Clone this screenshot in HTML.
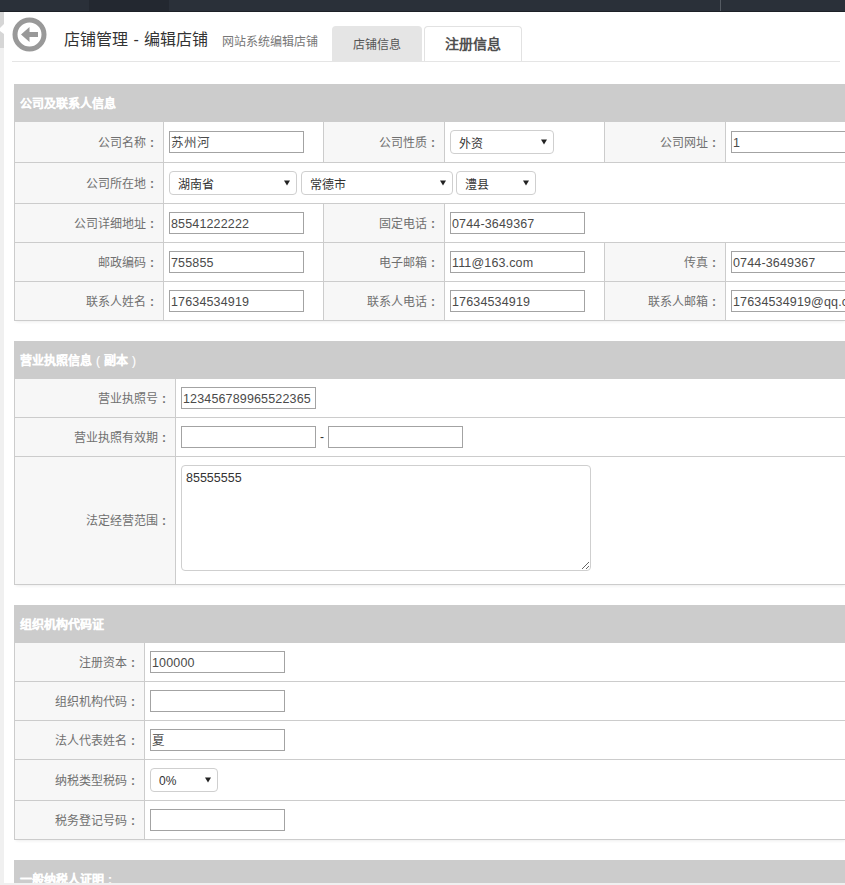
<!DOCTYPE html>
<html lang="zh-CN">
<head>
<meta charset="utf-8">
<style>
*{box-sizing:border-box}
html,body{margin:0;padding:0}
body{text-spacing-trim:space-all;width:845px;height:885px;overflow:hidden;position:relative;background:#fff;font-family:"Liberation Sans",sans-serif;font-size:12px;color:#555}
.a{position:absolute}
i{font-style:normal}
.co{display:inline-block;width:12px;text-align:center;font-weight:bold}
.lbl{white-space:nowrap;color:#707070;font-size:12px;padding-top:1px}
.hd{height:38px;line-height:38px;color:#fff;font-weight:bold;-webkit-text-stroke:0.15px #fff;font-size:12px;white-space:nowrap;padding-top:1px}
.inp{border:1px solid #a3a3a3;background:#fff;color:#4a4a4a;letter-spacing:0.15px;font-size:12.5px;line-height:20px;padding-left:1px;padding-top:1px;white-space:nowrap;overflow:hidden}
.sel{height:24px;border:1px solid #cfcfcf;border-radius:4px;background:#fff;color:#333;font-size:12px;line-height:22px;white-space:nowrap}
.sel .st{position:absolute;left:8px;top:1.5px}
.sel .ar{position:absolute;right:6px;top:8px}
.dash{font-size:12px;line-height:22px;color:#333}
.ta{border:1px solid #cfcfcf;border-radius:4px;background:#fff;color:#333;font-size:12.5px;line-height:16px;padding:4px 0 0 4px}
.ta .rs{position:absolute;right:1px;bottom:1px}
.topbar{left:0;top:0;width:845px;height:12px;background:#2a3039;border-bottom:1px solid #1d2127}
.title{left:64px;top:29px;font-size:16px;line-height:22px;color:#333;white-space:nowrap}
.sub{left:222px;top:34px;font-size:12px;line-height:16px;color:#777;white-space:nowrap}
.tab{top:26px;height:36px;border-radius:4px 4px 0 0;text-align:center;white-space:nowrap}
.tab1{left:332px;width:90px;background:#e5e5e5;font-size:12px;line-height:36px;padding-top:1px;color:#555}
.tab2{left:424px;width:98px;background:#fff;border:1px solid #e2e2e2;border-bottom:none;font-size:14px;font-weight:bold;line-height:34px;color:#505050}
</style>
</head>
<body>
<div class="a topbar"></div>
<div class="a" style="left:89px;top:0;width:80px;height:11px;background:#232830"></div>
<div class="a" style="left:720px;top:0;width:1px;height:11px;background:#555b63"></div>
<div class="a" style="left:0;top:12px;width:4px;height:873px;background:#f0f0f0"></div>
<div class="a" style="left:0;top:12px;width:4px;height:36px;background:#d6d6d6"></div>
<svg class="a" style="left:0;top:22px" width="5" height="14"><polygon points="4,2 0,6 0,9 4,12" fill="#fff"/></svg>
<svg class="a" style="left:12px;top:17px" width="36" height="36" viewBox="0 0 36 36">
<circle cx="17.5" cy="17.5" r="14.5" fill="none" stroke="#999" stroke-width="5"/>
<polygon points="9,17.5 17.5,10 17.5,15 26,15 26,20 17.5,20 17.5,25" fill="#999"/>
</svg>
<div class="a title">店铺管理<span style="word-spacing:1px"> - </span>编辑店铺</div>
<div class="a sub">网站系统编辑店铺</div>
<div class="a tab tab1">店铺信息</div>
<div class="a tab tab2">注册信息</div>
<div class="a" style="left:12px;top:61px;width:828px;height:1px;background:#e5e5e5"></div>
<div class="a" style="left:14px;top:84px;width:831px;height:38px;background:#cccccc"></div>
<div class="a hd" style="left:20px;top:84px;">公司及联系人信息</div>
<div class="a" style="left:14px;top:122px;width:831px;height:199px;box-shadow:1px 2px 3px -1px rgba(0,0,0,.07);background:#fff"></div>
<div class="a" style="left:14px;top:122px;width:1px;height:41px;background:#cccccc"></div>
<div class="a" style="left:14px;top:162px;width:831px;height:1px;background:#cccccc"></div>
<div class="a" style="left:15px;top:122px;width:148px;height:40px;background:#f7f7f7"></div>
<div class="a" style="left:163px;top:122px;width:1px;height:40px;background:#cccccc"></div>
<div class="a" style="left:323px;top:122px;width:1px;height:40px;background:#cccccc"></div>
<div class="a" style="left:324px;top:122px;width:120px;height:40px;background:#f7f7f7"></div>
<div class="a" style="left:444px;top:122px;width:1px;height:40px;background:#cccccc"></div>
<div class="a" style="left:604px;top:122px;width:1px;height:40px;background:#cccccc"></div>
<div class="a" style="left:605px;top:122px;width:120px;height:40px;background:#f7f7f7"></div>
<div class="a" style="left:725px;top:122px;width:1px;height:40px;background:#cccccc"></div>
<div class="a" style="left:14px;top:163px;width:1px;height:41px;background:#cccccc"></div>
<div class="a" style="left:14px;top:203px;width:831px;height:1px;background:#cccccc"></div>
<div class="a" style="left:15px;top:163px;width:148px;height:40px;background:#f7f7f7"></div>
<div class="a" style="left:163px;top:163px;width:1px;height:40px;background:#cccccc"></div>
<div class="a" style="left:14px;top:204px;width:1px;height:39px;background:#cccccc"></div>
<div class="a" style="left:14px;top:242px;width:831px;height:1px;background:#cccccc"></div>
<div class="a" style="left:15px;top:204px;width:148px;height:38px;background:#f7f7f7"></div>
<div class="a" style="left:163px;top:204px;width:1px;height:38px;background:#cccccc"></div>
<div class="a" style="left:323px;top:204px;width:1px;height:38px;background:#cccccc"></div>
<div class="a" style="left:324px;top:204px;width:120px;height:38px;background:#f7f7f7"></div>
<div class="a" style="left:444px;top:204px;width:1px;height:38px;background:#cccccc"></div>
<div class="a" style="left:14px;top:243px;width:1px;height:39px;background:#cccccc"></div>
<div class="a" style="left:14px;top:281px;width:831px;height:1px;background:#cccccc"></div>
<div class="a" style="left:15px;top:243px;width:148px;height:38px;background:#f7f7f7"></div>
<div class="a" style="left:163px;top:243px;width:1px;height:38px;background:#cccccc"></div>
<div class="a" style="left:323px;top:243px;width:1px;height:38px;background:#cccccc"></div>
<div class="a" style="left:324px;top:243px;width:120px;height:38px;background:#f7f7f7"></div>
<div class="a" style="left:444px;top:243px;width:1px;height:38px;background:#cccccc"></div>
<div class="a" style="left:604px;top:243px;width:1px;height:38px;background:#cccccc"></div>
<div class="a" style="left:605px;top:243px;width:120px;height:38px;background:#f7f7f7"></div>
<div class="a" style="left:725px;top:243px;width:1px;height:38px;background:#cccccc"></div>
<div class="a" style="left:14px;top:282px;width:1px;height:39px;background:#cccccc"></div>
<div class="a" style="left:14px;top:320px;width:831px;height:1px;background:#cccccc"></div>
<div class="a" style="left:15px;top:282px;width:148px;height:38px;background:#f7f7f7"></div>
<div class="a" style="left:163px;top:282px;width:1px;height:38px;background:#cccccc"></div>
<div class="a" style="left:323px;top:282px;width:1px;height:38px;background:#cccccc"></div>
<div class="a" style="left:324px;top:282px;width:120px;height:38px;background:#f7f7f7"></div>
<div class="a" style="left:444px;top:282px;width:1px;height:38px;background:#cccccc"></div>
<div class="a" style="left:604px;top:282px;width:1px;height:38px;background:#cccccc"></div>
<div class="a" style="left:605px;top:282px;width:120px;height:38px;background:#f7f7f7"></div>
<div class="a" style="left:725px;top:282px;width:1px;height:38px;background:#cccccc"></div>
<div class="a lbl" style="right:687px;top:122px;height:40px;line-height:40px">公司名称<i class="co">:</i></div>
<div class="a inp" style="left:169px;top:131px;width:135px;height:22px">苏州河</div>
<div class="a lbl" style="right:406px;top:122px;height:40px;line-height:40px">公司性质<i class="co">:</i></div>
<div class="a sel" style="left:450px;top:130px;width:104px"><span class="st" style="">外资</span><svg class="ar" width="6" height="6" viewBox="0 0 6 6"><polygon points="0,0.5 6,0.5 3,5.5" fill="#222"/></svg></div>
<div class="a lbl" style="right:125px;top:122px;height:40px;line-height:40px">公司网址<i class="co">:</i></div>
<div class="a inp" style="left:731px;top:131px;width:200px;height:22px">1</div>
<div class="a lbl" style="right:687px;top:163px;height:40px;line-height:40px">公司所在地<i class="co">:</i></div>
<div class="a sel" style="left:169px;top:171px;width:128px"><span class="st" style="">湖南省</span><svg class="ar" width="6" height="6" viewBox="0 0 6 6"><polygon points="0,0.5 6,0.5 3,5.5" fill="#222"/></svg></div>
<div class="a sel" style="left:301px;top:171px;width:152px"><span class="st" style="">常德市</span><svg class="ar" width="6" height="6" viewBox="0 0 6 6"><polygon points="0,0.5 6,0.5 3,5.5" fill="#222"/></svg></div>
<div class="a sel" style="left:456px;top:171px;width:80px"><span class="st" style="">澧县</span><svg class="ar" width="6" height="6" viewBox="0 0 6 6"><polygon points="0,0.5 6,0.5 3,5.5" fill="#222"/></svg></div>
<div class="a lbl" style="right:687px;top:204px;height:38px;line-height:38px">公司详细地址<i class="co">:</i></div>
<div class="a inp" style="left:169px;top:212px;width:135px;height:22px">85541222222</div>
<div class="a lbl" style="right:406px;top:204px;height:38px;line-height:38px">固定电话<i class="co">:</i></div>
<div class="a inp" style="left:450px;top:212px;width:135px;height:22px">0744-3649367</div>
<div class="a lbl" style="right:687px;top:243px;height:38px;line-height:38px">邮政编码<i class="co">:</i></div>
<div class="a inp" style="left:169px;top:251px;width:135px;height:22px">755855</div>
<div class="a lbl" style="right:406px;top:243px;height:38px;line-height:38px">电子邮箱<i class="co">:</i></div>
<div class="a inp" style="left:450px;top:251px;width:135px;height:22px">111@163.com</div>
<div class="a lbl" style="right:125px;top:243px;height:38px;line-height:38px">传真<i class="co">:</i></div>
<div class="a inp" style="left:731px;top:251px;width:200px;height:22px">0744-3649367</div>
<div class="a lbl" style="right:687px;top:282px;height:38px;line-height:38px">联系人姓名<i class="co">:</i></div>
<div class="a inp" style="left:169px;top:290px;width:135px;height:22px">17634534919</div>
<div class="a lbl" style="right:406px;top:282px;height:38px;line-height:38px">联系人电话<i class="co">:</i></div>
<div class="a inp" style="left:450px;top:290px;width:135px;height:22px">17634534919</div>
<div class="a lbl" style="right:125px;top:282px;height:38px;line-height:38px">联系人邮箱<i class="co">:</i></div>
<div class="a inp" style="left:731px;top:290px;width:200px;height:22px">17634534919@qq.com</div>
<div class="a" style="left:14px;top:341px;width:831px;height:38px;background:#cccccc"></div>
<div class="a hd" style="left:20px;top:341px;">营业执照信息<i class="co" style="font-weight:normal">(</i>副本<i class="co" style="font-weight:normal">)</i></div>
<div class="a" style="left:14px;top:379px;width:831px;height:206px;box-shadow:1px 2px 3px -1px rgba(0,0,0,.07);background:#fff"></div>
<div class="a" style="left:14px;top:379px;width:1px;height:39px;background:#cccccc"></div>
<div class="a" style="left:14px;top:417px;width:831px;height:1px;background:#cccccc"></div>
<div class="a" style="left:15px;top:379px;width:160px;height:38px;background:#f7f7f7"></div>
<div class="a" style="left:175px;top:379px;width:1px;height:38px;background:#cccccc"></div>
<div class="a" style="left:14px;top:418px;width:1px;height:39px;background:#cccccc"></div>
<div class="a" style="left:14px;top:456px;width:831px;height:1px;background:#cccccc"></div>
<div class="a" style="left:15px;top:418px;width:160px;height:38px;background:#f7f7f7"></div>
<div class="a" style="left:175px;top:418px;width:1px;height:38px;background:#cccccc"></div>
<div class="a" style="left:14px;top:457px;width:1px;height:128px;background:#cccccc"></div>
<div class="a" style="left:14px;top:584px;width:831px;height:1px;background:#cccccc"></div>
<div class="a" style="left:15px;top:457px;width:160px;height:127px;background:#f7f7f7"></div>
<div class="a" style="left:175px;top:457px;width:1px;height:127px;background:#cccccc"></div>
<div class="a lbl" style="right:675px;top:379px;height:38px;line-height:38px">营业执照号<i class="co">:</i></div>
<div class="a inp" style="left:181px;top:387px;width:135px;height:22px">123456789965522365</div>
<div class="a lbl" style="right:675px;top:418px;height:38px;line-height:38px">营业执照有效期<i class="co">:</i></div>
<div class="a inp" style="left:181px;top:426px;width:135px;height:22px"></div>
<div class="a dash" style="left:320px;top:426px;">-</div>
<div class="a inp" style="left:328px;top:426px;width:135px;height:22px"></div>
<div class="a lbl" style="right:675px;top:457px;height:127px;line-height:127px">法定经营范围<i class="co">:</i></div>
<div class="a ta" style="left:181px;top:465px;width:410px;height:106px">85555555</div>
<svg class="a" style="left:580px;top:560px" width="10" height="10" shape-rendering="crispEdges" fill="#666"><rect x="2" y="8" width="1" height="1"/><rect x="3" y="7" width="1" height="1"/><rect x="4" y="6" width="1" height="1"/><rect x="5" y="5" width="1" height="1"/><rect x="6" y="4" width="1" height="1"/><rect x="7" y="3" width="1" height="1"/><rect x="8" y="2" width="1" height="1"/><rect x="6" y="8" width="1" height="1"/><rect x="7" y="7" width="1" height="1"/><rect x="8" y="6" width="1" height="1"/></svg>
<div class="a" style="left:14px;top:605px;width:831px;height:38px;background:#cccccc"></div>
<div class="a hd" style="left:20px;top:605px;">组织机构代码证</div>
<div class="a" style="left:14px;top:643px;width:831px;height:197px;box-shadow:1px 2px 3px -1px rgba(0,0,0,.07);background:#fff"></div>
<div class="a" style="left:14px;top:643px;width:1px;height:39px;background:#cccccc"></div>
<div class="a" style="left:14px;top:681px;width:831px;height:1px;background:#cccccc"></div>
<div class="a" style="left:15px;top:643px;width:129px;height:38px;background:#f7f7f7"></div>
<div class="a" style="left:144px;top:643px;width:1px;height:38px;background:#cccccc"></div>
<div class="a" style="left:14px;top:682px;width:1px;height:39px;background:#cccccc"></div>
<div class="a" style="left:14px;top:720px;width:831px;height:1px;background:#cccccc"></div>
<div class="a" style="left:15px;top:682px;width:129px;height:38px;background:#f7f7f7"></div>
<div class="a" style="left:144px;top:682px;width:1px;height:38px;background:#cccccc"></div>
<div class="a" style="left:14px;top:721px;width:1px;height:39px;background:#cccccc"></div>
<div class="a" style="left:14px;top:759px;width:831px;height:1px;background:#cccccc"></div>
<div class="a" style="left:15px;top:721px;width:129px;height:38px;background:#f7f7f7"></div>
<div class="a" style="left:144px;top:721px;width:1px;height:38px;background:#cccccc"></div>
<div class="a" style="left:14px;top:760px;width:1px;height:41px;background:#cccccc"></div>
<div class="a" style="left:14px;top:800px;width:831px;height:1px;background:#cccccc"></div>
<div class="a" style="left:15px;top:760px;width:129px;height:40px;background:#f7f7f7"></div>
<div class="a" style="left:144px;top:760px;width:1px;height:40px;background:#cccccc"></div>
<div class="a" style="left:14px;top:801px;width:1px;height:39px;background:#cccccc"></div>
<div class="a" style="left:14px;top:839px;width:831px;height:1px;background:#cccccc"></div>
<div class="a" style="left:15px;top:801px;width:129px;height:38px;background:#f7f7f7"></div>
<div class="a" style="left:144px;top:801px;width:1px;height:38px;background:#cccccc"></div>
<div class="a lbl" style="right:706px;top:643px;height:38px;line-height:38px">注册资本<i class="co">:</i></div>
<div class="a inp" style="left:150px;top:651px;width:135px;height:22px">100000</div>
<div class="a lbl" style="right:706px;top:682px;height:38px;line-height:38px">组织机构代码<i class="co">:</i></div>
<div class="a inp" style="left:150px;top:690px;width:135px;height:22px"></div>
<div class="a lbl" style="right:706px;top:721px;height:38px;line-height:38px">法人代表姓名<i class="co">:</i></div>
<div class="a inp" style="left:150px;top:729px;width:135px;height:22px">夏</div>
<div class="a lbl" style="right:706px;top:760px;height:40px;line-height:40px">纳税类型税码<i class="co">:</i></div>
<div class="a sel" style="left:150px;top:768px;width:68px"><span class="st" style="top:0.5px">0%</span><svg class="ar" width="6" height="6" viewBox="0 0 6 6"><polygon points="0,0.5 6,0.5 3,5.5" fill="#222"/></svg></div>
<div class="a lbl" style="right:706px;top:801px;height:38px;line-height:38px">税务登记号码<i class="co">:</i></div>
<div class="a inp" style="left:150px;top:809px;width:135px;height:22px"></div>
<div class="a" style="left:14px;top:860px;width:831px;height:38px;background:#cccccc"></div>
<div class="a hd" style="left:20px;top:860px;">一般纳税人证明<i class="co">:</i></div>
<div class="a" style="left:0;top:883px;width:845px;height:2px;background:#f0f0f0"></div>
</body>
</html>
